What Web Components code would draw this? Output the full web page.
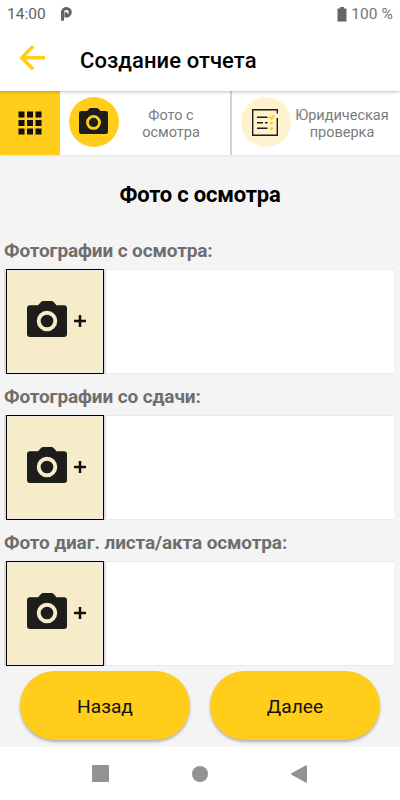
<!DOCTYPE html>
<html lang="ru">
<head>
<meta charset="utf-8">
<title>Создание отчета</title>
<style>
    html, body {
        margin: 0;
        height: 100%;
        overflow: hidden;
        font-family: Roboto, "Liberation Sans", sans-serif;
        background: #f4f4f4;
    }
</style>
</head>
<body>
<report-app></report-app>

<script>
/**
 * base for all elements: puts css and html into an open shadow root
 */
class BaseElement extends HTMLElement {
    constructor() {
        super();
        this.root = this.attachShadow({ mode: "open" });
    }

    connectedCallback() {
        const template = document.createElement("template");
        template.innerHTML = `<style>${this.css()}</style>${this.html()}`;
        this.root.replaceChildren(template.content.cloneNode(true));
    }
}


class CameraIcon extends BaseElement {
    css() {
        return `
        :host { display: block; width: 40px; height: 36px; }
        svg { display: block; width: 100%; height: 100%; }
        `;
    }

    html() {
        return `
        <svg viewBox="0 0 40 36" preserveAspectRatio="none">
            <path fill="#1d1d1b" d="M3 4.2H11L14 1Q15 0 16.200 0H24.500Q25.700 0 26.700 1L29.500 4.200H37Q40 4.200 40 7.200V33Q40 36 37 36H3Q0 36 0 33V7.200Q0 4.200 3 4.200Z"/>
            <circle cx="20" cy="20" r="8.300" fill="none" stroke="var(--lens, #f6ecc9)" stroke-width="3.900"/>
        </svg>`;
    }
}
customElements.define("camera-icon", CameraIcon);


class StatusBar extends BaseElement {
    css() {
        return `
        :host {
            display: flex;
            align-items: center;
            height: 28px;
            padding: 0 7px;
            box-sizing: border-box;
            background: #fff;
            color: #626262;
            font-size: 15.500px;
        }
        .logo { margin-left: 15px; }
        .battery { margin-left: auto; margin-right: 4px; }
        .level { color: #757575; letter-spacing: .1px; }
        `;
    }

    html() {
        return `
        <span>14:00</span>
        <svg class="logo" width="11" height="14" viewBox="0 0 11 14">
            <path fill="none" stroke="#626262" stroke-width="3" d="M1.500 5.200A4 3.700 0 0 1 5.500 1.500A3.800 3.700 0 0 1 5.500 8.900H4.900V5.200"/>
            <path fill="#626262" d="M0 4.500H3V13.700H0Z"/>
        </svg>
        <svg class="battery" width="10" height="15" viewBox="0 0 10 15">
            <path fill="#666" d="M3 0H7V1.500H9.500V14.500H.5V1.500H3Z"/>
        </svg>
        <span class="level">100 %</span>`;
    }
}
customElements.define("status-bar", StatusBar);


class AppHeader extends BaseElement {
    css() {
        return `
        :host {
            display: flex;
            align-items: center;
            height: 63px;
            background: #fff;
            padding: 0 0 3px 19px;
            box-sizing: border-box;
            box-shadow: 0 1px 3px rgba(0, 0, 0, .25);
            clip-path: inset(0 0 -5px 0);
            position: relative;
        }
        h1 {
            margin: 5px 0 0 34px;
            font-size: 22px;
            font-weight: 500;
            letter-spacing: .08px;
            color: #000;
        }
        `;
    }

    html() {
        return `
        <svg width="27" height="26" viewBox="0 0 27 26" fill="none" stroke="#ffcd1a" stroke-width="3.500">
            <path d="M26 12.800H3M14.200 1.300L2.800 12.800L14.200 24.300"/>
        </svg>
        <h1><slot></slot></h1>`;
    }
}
customElements.define("app-header", AppHeader);


class StepTab extends BaseElement {
    css() {
        return `
        :host {
            display: flex;
            align-items: center;
            box-sizing: border-box;
            background: #fff;
        }
        .circle {
            display: flex;
            align-items: center;
            justify-content: center;
            flex: none;
            width: 50.500px;
            height: 50.500px;
            margin: 0 0 2px 8.500px;
            border-radius: 50%;
            background: var(--circle, #ffcd1a);
        }
        .text {
            flex: 1;
            margin: 3px 7px 0 0;
            text-align: center;
            white-space: nowrap;
            color: #7c7c7c;
            font-size: 14.500px;
            line-height: 16.500px;
        }
        `;
    }

    html() {
        return `
        <div class="circle"><slot name="icon"></slot></div>
        <div class="text"><slot></slot></div>`;
    }
}
customElements.define("step-tab", StepTab);


class StepBar extends BaseElement {
    css() {
        return `
        :host {
            display: grid;
            grid-template-columns: 60px 170px 170px;
            height: 64px;
            box-shadow: 0 1px 2px rgba(0, 0, 0, .05);
        }
        .menu {
            display: flex;
            align-items: center;
            justify-content: center;
            background: #ffcd1a;
        }
        camera-icon { width: 29px; height: 26px; margin-bottom: 3px; --lens: #ffcd1a; }
        .second { border-left: 2px solid #d3d2d8; --circle: #fff3ce; }
        `;
    }

    html() {
        return `
        <div class="menu">
            <svg width="24" height="24" viewBox="0 0 24 24">
                <path fill="#111" d="M.500 .500h6v6h-6zM9 .500h6v6h-6zM17.500 .500h6v6h-6zM.500 9h6v6h-6zM9 9h6v6h-6zM17.500 9h6v6h-6zM.500 17.500h6v6h-6zM9 17.500h6v6h-6zM17.500 17.500h6v6h-6z"/>
            </svg>
        </div>
        <step-tab><camera-icon slot="icon"></camera-icon>Фото с<br>осмотра</step-tab>
        <step-tab class="second">
            <svg slot="icon" width="27" height="27" viewBox="0 0 27 27" fill="none">
                <path stroke="#1d1d1b" stroke-width="1.400" d="M25.300 4.500V.700H.700V26.300H25.300V9"/>
                <path stroke="#1d1d1b" stroke-width="1.500" d="M5 8.300H15.500M5 13.800H11M13 13.800H15.500M5 19.300H15.500"/>
                <path stroke="#ffcd1a" stroke-width="2" d="M17.500 7.500L19.500 9.500L22.500 6.500"/>
                <circle cx="19.500" cy="14" r="1.600" fill="#ffcd1a"/>
                <circle cx="19.500" cy="19.500" r="1.600" fill="#ffcd1a"/>
            </svg>Юридическая<br>проверка</step-tab>`;
    }
}
customElements.define("step-bar", StepBar);


class PhotoSection extends BaseElement {
    css() {
        return `
        :host { display: block; height: 146px; padding: 0 6px 0 4px; box-sizing: border-box; }
        h3 {
            margin: 0;
            height: 41px;
            line-height: 46px;
            font-size: 19px;
            font-weight: 700;
            letter-spacing: -.12px;
            color: #6e6e6e;
        }
        .strip {
            display: flex;
            height: 105px;
            box-sizing: border-box;
            background: #fff;
            border: solid #ebebeb;
            border-width: 1px 0;
        }
        .frame {
            flex: none;
            width: 102px;
            height: 105px;
            margin-top: -1px;
            padding: 0 2px;
            box-sizing: border-box;
            background: #dddce1;
        }
        .add {
            display: flex;
            align-items: center;
            height: 105px;
            padding: 0 0 6px 20px;
            box-sizing: border-box;
            border: 1px solid #000;
            box-shadow: inset 0 0 0 1px #eeebe4;
            background: #f6ecc9;
        }
        .plus { margin: 4px 0 0 7px; }
        `;
    }

    html() {
        return `
        <h3><slot></slot></h3>
        <div class="strip">
            <div class="frame">
                <div class="add">
                    <camera-icon></camera-icon>
                    <svg class="plus" width="12" height="12" viewBox="0 0 12 12">
                        <path stroke="#111" stroke-width="2.500" d="M6 0V12M0 6H12"/>
                    </svg>
                </div>
            </div>
        </div>`;
    }
}
customElements.define("photo-section", PhotoSection);


class PillButton extends BaseElement {
    css() {
        return `
        :host { display: block; width: 170px; height: 68.500px; }
        button {
            width: 100%;
            height: 100%;
            padding: 2px 0 0;
            border: 0;
            border-radius: 35px;
            background: #ffcd1a;
            box-shadow: 0 2px 3px rgba(0, 0, 0, .28);
            font: 400 19.200px Roboto, "Liberation Sans", sans-serif;
            color: #111;
        }
        `;
    }

    html() {
        return `<button><slot></slot></button>`;
    }
}
customElements.define("pill-button", PillButton);


class NavBar extends BaseElement {
    css() {
        return `
        :host {
            display: flex;
            justify-content: center;
            align-items: center;
            gap: 83px;
            height: 53px;
            background: #fff;
        }
        `;
    }

    html() {
        return `
        <svg width="17" height="17"><rect width="17" height="17" rx="1" fill="#929292"/></svg>
        <svg width="16" height="16"><circle cx="8" cy="8" r="8" fill="#929292"/></svg>
        <svg width="17" height="18"><path fill="#929292" d="M.500 8.200L15 .200Q16 0 16 1V17Q16 18 15 17.800L.500 9.800Q-.500 9 .500 8.200Z"/></svg>`;
    }
}
customElements.define("nav-bar", NavBar);


class ReportApp extends BaseElement {
    css() {
        return `
        :host { display: flex; flex-direction: column; width: 400px; height: 800px; background: #f4f4f4; }
        h2 {
            margin: 0;
            height: 73px;
            line-height: 79px;
            text-align: center;
            font-size: 22px;
            font-weight: 700;
            letter-spacing: -.2px;
            color: #000;
        }
        .buttons { display: flex; justify-content: center; gap: 20px; padding-top: 5px; }
        nav-bar { margin-top: auto; }
        `;
    }

    html() {
        return `
        <status-bar></status-bar>
        <app-header>Создание отчета</app-header>
        <step-bar></step-bar>
        <h2>Фото с осмотра</h2>
        <photo-section>Фотографии с осмотра:</photo-section>
        <photo-section>Фотографии со сдачи:</photo-section>
        <photo-section>Фото диаг. листа/акта осмотра:</photo-section>
        <div class="buttons">
            <pill-button>Назад</pill-button>
            <pill-button>Далее</pill-button>
        </div>
        <nav-bar></nav-bar>`;
    }
}
customElements.define("report-app", ReportApp);
</script>
</body>
</html>
